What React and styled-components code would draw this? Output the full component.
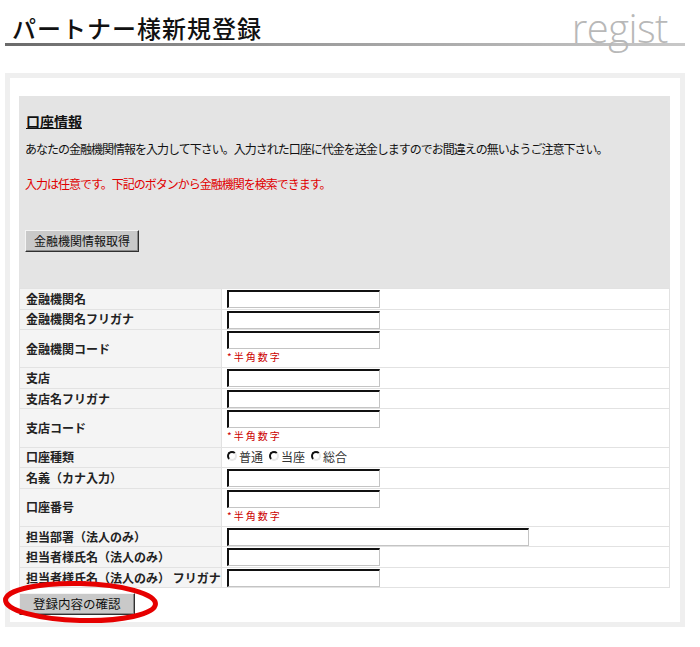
import React from 'react';
import styled, { createGlobalStyle } from 'styled-components';

const GlobalStyle = createGlobalStyle`
    body {
        margin: 0;
        background: #fff;
        font-family: "Noto Sans CJK JP", "Liberation Sans", sans-serif;
        color: #000;
    }
`;

const Page = styled.div`
    width: 700px;
`;

const Header = styled.div`
    display: flex;
    justify-content: space-between;
    align-items: flex-end;
    margin-left: 5px;
    width: 680px;
    box-sizing: border-box;
    padding: 0 17px 0 7px;
`;

const Title = styled.h1`
    margin: 0;
    font-size: 24px;
    line-height: 30px;
    font-weight: 500;
    letter-spacing: 1px;
    color: #111;
`;

const Regist = styled.span`
    position: relative;
    z-index: 1;
    font-family: "Open Sans", "DejaVu Sans", sans-serif;
    font-weight: 300;
    font-size: 40px;
    line-height: normal;
    letter-spacing: -0.5px;
    color: #b8b8b8;
    margin-bottom: -12px;
`;

const Rule = styled.div`
    margin-left: 5px;
    width: 680px;
    height: 3px;
    background: linear-gradient(to right, #6a6a6a, #999 40%, #c8c8c8);
`;

const Frame = styled.div`
    margin: 27px 0 0 5px;
    width: 680px;
    box-sizing: border-box;
    border: 5px solid #efefef;
    padding: 18px 10px 7px 9px;
    background: #fff;
`;

const Intro = styled.div`
    background: #e4e4e4;
    padding: 15px 6px 37px 6px;
`;

const Heading = styled.h2`
    margin: 0 0 0 1px;
    font-size: 14px;
    line-height: 20px;
    font-weight: bold;
    text-decoration: underline;
    color: #111;
`;

const Text = styled.p`
    margin: ${(p) => p.$top || 0}px 0 0 0;
    font-size: 12px;
    line-height: 18px;
    letter-spacing: -1px;
    color: ${(p) => (p.$red ? '#e00000' : '#111')};
`;

const Button = styled.button`
    font-family: "Noto Sans CJK JP", sans-serif;
    font-size: ${(p) => p.$size || 12}px;
    line-height: 18px;
    height: 22px;
    padding: 0 ${(p) => p.$pad || 8}px;
    margin-top: ${(p) => p.$top || 0}px;
    background: #c9c9c9;
    color: #111;
    border: 1px solid;
    border-color: #f4f4f4 #303030 #303030 #f4f4f4;
    box-shadow: inset -1px -1px 0 #8a8a8a;
    cursor: pointer;
`;

const Table = styled.table`
    width: 100%;
    border-collapse: separate;
    border-spacing: 1px;
    margin: -1px 0 0 0;
    background: #e2e2e2;
`;

const Label = styled.td`
    width: 195px;
    background: #f4f4f4;
    padding: 0 0 0 6px;
    font-size: 12px;
    font-weight: bold;
    line-height: 18px;
    color: #222;
    vertical-align: middle;
    white-space: nowrap;
`;

const Cell = styled.td`
    background: #fff;
    padding: 1px 5px 0 5px;
    vertical-align: top;
    height: ${(p) => (p.$tall ? 37.3 : 19.5)}px;
    box-sizing: border-box;
`;

const Field = styled.input`
    display: block;
    box-sizing: border-box;
    width: ${(p) => (p.$wide ? 302 : 153)}px;
    height: 18px;
    margin: 0;
    padding: 0 2px;
    background: #fff;
    border-style: solid;
    border-width: 2px 1px 1px 2px;
    border-color: #111 #c4c4c4 #c4c4c4 #111;
    outline: none;
`;

const Note = styled.div`
    font-size: 10px;
    line-height: 16px;
    letter-spacing: 2px;
    color: #cc0000;
`;

const Radios = styled.div`
    display: flex;
    gap: 6px;
    font-size: 12px;
    line-height: 17px;
    color: #333;
    margin-top: -1px;
`;

const RadioLabel = styled.label`
    display: flex;
    align-items: center;
`;

const Radio = styled.input`
    appearance: none;
    width: 10px;
    height: 10px;
    margin: 0 2px 0 0;
    border-radius: 50%;
    border: 2px solid;
    border-color: #111 #e8e8e8 #e8e8e8 #111;
    background: #fff;
    box-sizing: border-box;
`;

const Footer = styled.div`
    position: relative;
    margin-top: 2px;
`;

const Ellipse = styled.svg`
    position: absolute;
    left: -17px;
    top: -10px;
    pointer-events: none;
`;

const rows = [
    { label: '金融機関名' },
    { label: '金融機関名フリガナ' },
    { label: '金融機関コード', note: true },
    { label: '支店' },
    { label: '支店名フリガナ' },
    { label: '支店コード', note: true },
    { label: '口座種類', radio: ['普通', '当座', '総合'] },
    { label: '名義（カナ入力）' },
    { label: '口座番号', note: true },
    { label: '担当部署（法人のみ）', wide: true },
    { label: '担当者様氏名（法人のみ）' },
    { label: '担当者様氏名（法人のみ） フリガナ' },
];

export default function App() {
    return (
        <Page>
            <GlobalStyle />
            <Header>
                <Title>パートナー様新規登録</Title>
                <Regist>regist</Regist>
            </Header>
            <Rule />
            <Frame>
                <Intro>
                    <Heading>口座情報</Heading>
                    <Text $top={9}>
                        あなたの金融機関情報を入力して下さい。入力された口座に代金を送金しますのでお間違えの無いようご注意下さい。
                    </Text>
                    <Text $top={17} $red>
                        入力は任意です。下記のボタンから金融機関を検索できます。
                    </Text>
                    <Button $top={37}>金融機関情報取得</Button>
                </Intro>
                <Table>
                    <tbody>
                        {rows.map((row) => (
                            <tr key={row.label}>
                                <Label>{row.label}</Label>
                                <Cell $tall={row.note}>
                                    {row.radio ? (
                                        <Radios>
                                            {row.radio.map((r) => (
                                                <RadioLabel key={r}>
                                                    <Radio type="radio" name="kind" />
                                                    {r}
                                                </RadioLabel>
                                            ))}
                                        </Radios>
                                    ) : (
                                        <Field type="text" $wide={row.wide} />
                                    )}
                                    {row.note && <Note>*半角数字</Note>}
                                </Cell>
                            </tr>
                        ))}
                    </tbody>
                </Table>
                <Footer>
                    <Button $size={12.5} $pad={13}>登録内容の確認</Button>
                    <Ellipse width="170" height="52" viewBox="0 0 170 52">
                        <ellipse
                            cx="78.5"
                            cy="22"
                            rx="75"
                            ry="18.5"
                            fill="none"
                            stroke="#e60000"
                            strokeWidth="5"
                            transform="rotate(1.5 78.5 22)"
                        />
                    </Ellipse>
                </Footer>
            </Frame>
        </Page>
    );
}
